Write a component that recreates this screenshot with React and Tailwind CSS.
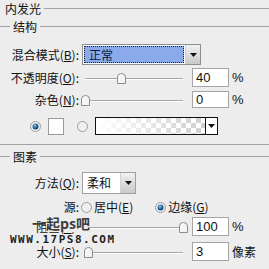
import React from 'react';

const cjk = { fontFamily: '"Noto Sans CJK SC", "Noto Sans", sans-serif' };

const SectionHead = ({ title, first }) => (
  <div className={`flex items-center ${first ? 'h-[17px]' : 'h-[15px]'}`}>
    {!first && <div className="w-[10px] border-t border-[#a3a3a3]" />}
    <span className={`${first ? 'pl-[5px]' : 'pl-[3px]'} pr-[3px] text-[12px] leading-none text-[#111]`}>{title}</span>
    <div className="flex-1 border-t border-[#a3a3a3]" />
  </div>
);

const Label = ({ children }) => (
  <div className="w-[80px] shrink-0 text-right pr-[1px] text-[12px] leading-none text-[#111]">{children}</div>
);

const Arrow = () => (
  <svg width="7" height="4" viewBox="0 0 7 4">
    <path d="M0 0H7L3.5 4Z" fill="#111" />
  </svg>
);

const Thumb = ({ left }) => (
  <svg className="absolute top-[-5px]" style={{ left }} width="9" height="11" viewBox="0 0 9 11">
    <path d="M0.5 10.5V4Q0.5 0.5 4.5 0.5Q8.5 0.5 8.5 4V10.5Z" fill="#f4f4f4" stroke="#8c8c8c" />
    <path d="M2 9.5V4.5Q2 2 4.5 2" fill="none" stroke="#fff" />
  </svg>
);

const Slider = ({ left }) => (
  <div className="relative w-[106px] h-[4px] mt-[4px]">
    <div className="absolute left-[3px] w-[98px] top-0 h-[2px] border-t border-[#a6a6a6] border-b border-b-white" />
    <Thumb left={left} />
  </div>
);

const NumBox = ({ value, unit }) => (
  <>
    <div
      className="ml-[4px] w-[37px] h-full bg-white border border-[#a5a5a5] flex items-center pl-[3px] text-[13px] text-[#111]"
      style={{ fontFamily: '"Liberation Sans", Arial, sans-serif' }}
    >
      {value}
    </div>
    <span className="ml-[3px] text-[12px] leading-none text-[#111]" style={unit === '%' ? { fontFamily: '"Liberation Sans", Arial, sans-serif', fontSize: 13 } : undefined}>
      {unit}
    </span>
  </>
);

const Radio = ({ on }) => (
  <svg width="11" height="11" viewBox="0 0 11 11">
    <defs>
      <radialGradient id="rg" cx="0.4" cy="0.35" r="0.7">
        <stop offset="0" stopColor="#8fc3ea" />
        <stop offset="0.6" stopColor="#1e5f94" />
        <stop offset="1" stopColor="#0c3a63" />
      </radialGradient>
    </defs>
    <circle cx="5.5" cy="5.5" r="5" fill="#f0f0f0" stroke="#9b9b9b" />
    {on && <circle cx="5.5" cy="5.5" r="3" fill="url(#rg)" />}
  </svg>
);

const GradientPreview = () => (
  <svg width="109" height="16" viewBox="0 0 109 16" className="block">
    <defs>
      <pattern id="chk" width="10" height="10" patternUnits="userSpaceOnUse">
        <rect width="10" height="10" fill="#fff" />
        <rect width="5" height="5" fill="#cfcfcf" />
        <rect x="5" y="5" width="5" height="5" fill="#cfcfcf" />
      </pattern>
      <linearGradient id="wf" x1="0" x2="1">
        <stop offset="0" stopColor="#fff" stopOpacity="1" />
        <stop offset="1" stopColor="#fff" stopOpacity="0" />
      </linearGradient>
    </defs>
    <rect width="109" height="16" fill="url(#chk)" />
    <rect width="109" height="16" fill="url(#wf)" />
  </svg>
);

export default function App() {
  return (
    <div className="relative w-[269px] h-[269px] overflow-hidden bg-[#ededed] select-none" style={cjk}>
      <SectionHead title="内发光" first />
      <div className="mt-[2px]">
        <SectionHead title="结构" />
      </div>

      {/* blend mode */}
      <div className="mt-[10px] h-[21px] flex items-center">
        <Label>混合模式(<span className="underline">B</span>):</Label>
        <div className="ml-[2px] w-[119px] h-full flex border border-[#8f8f8f] bg-white">
          <div className="flex-1 m-[1px] bg-[#8aaaea] border border-dotted border-[#222] flex items-center pl-[4px] text-[12px] leading-none text-[#0d1a45]">
            正常
          </div>
          <div className="w-[15px] bg-gradient-to-b from-[#f1f1f1] to-[#c9c9c9] border-l border-[#d2d2d2] flex items-center justify-center">
            <Arrow />
          </div>
        </div>
      </div>

      {/* opacity */}
      <div className="mt-[3px] h-[19px] flex items-center">
        <Label>不透明度(<span className="underline">O</span>):</Label>
        <div className="ml-[2px]"><Slider left={35} /></div>
        <NumBox value="40" unit="%" />
      </div>

      {/* noise */}
      <div className="mt-[4px] h-[17px] flex items-center">
        <Label>杂色(<span className="underline">N</span>):</Label>
        <div className="ml-[2px]"><Slider left={-1} /></div>
        <NumBox value="0" unit="%" />
      </div>

      {/* colour / gradient */}
      <div className="mt-[9px] h-[18px] flex items-center">
        <div className="ml-[30px]"><Radio on /></div>
        <div className="ml-[7px] w-[16px] h-[17px] bg-white border border-[#9a9a9a]" />
        <div className="ml-[13px]"><Radio /></div>
        <div className="ml-[7px] w-[123px] h-full flex border border-[#111]">
          <GradientPreview />
          <div className="w-[12px] border-l border-[#111] bg-white flex items-center justify-center">
            <Arrow />
          </div>
        </div>
      </div>

      <div className="mt-[9px] border-t border-[#a3a3a3]" />

      <div className="mt-[4px]">
        <SectionHead title="图素" />
      </div>

      {/* technique */}
      <div className="mt-[8px] h-[22px] flex items-center">
        <Label>方法(<span className="underline">Q</span>):</Label>
        <div className="ml-[2px] w-[54px] h-full flex border border-[#a0a0a0] bg-white">
          <div className="flex-1 flex items-center pl-[4px] text-[12px] leading-none text-[#111]">柔和</div>
          <div className="w-[15px] bg-gradient-to-b from-[#f1f1f1] to-[#c9c9c9] border-l border-[#d2d2d2] flex items-center justify-center">
            <Arrow />
          </div>
        </div>
      </div>

      {/* source */}
      <div className="mt-[5px] h-[16px] flex items-center text-[12px] leading-none text-[#111]">
        <Label>源:</Label>
        <div className="ml-[1px]"><Radio /></div>
        <span className="ml-[2px]">居中(<span className="underline">E</span>)</span>
        <div className="ml-[22px]"><Radio on /></div>
        <span className="ml-[2px]">边缘(<span className="underline">G</span>)</span>
      </div>

      {/* choke */}
      <div className="mt-[2px] h-[19px] flex items-center">
        <Label>阻塞(<span className="underline">C</span>):</Label>
        <div className="ml-[2px]"><Slider left={97} /></div>
        <NumBox value="100" unit="%" />
      </div>

      {/* size */}
      <div className="mt-[6px] h-[19px] flex items-center">
        <Label>大小(<span className="underline">S</span>):</Label>
        <div className="ml-[2px]"><Slider left={2} /></div>
        <NumBox value="3" unit="像素" />
      </div>

      {/* watermark over the dialog */}
      <div className="absolute left-[32px] top-[216px] flex text-[14px] leading-none font-bold text-[#3c3c3c]">
        <span>一</span>
        <span className="bg-[#ededed] pb-[2px]">起ps吧</span>
      </div>
      <div
        className="absolute left-[10px] top-[234px] bg-[#ededed] text-[11px] leading-none font-black tracking-[1.5px] text-[#1e1e1e]"
        style={{ fontFamily: '"DejaVu Sans Mono", monospace' }}
      >
        WWW.17PS8.COM
      </div>
    </div>
  );
}
